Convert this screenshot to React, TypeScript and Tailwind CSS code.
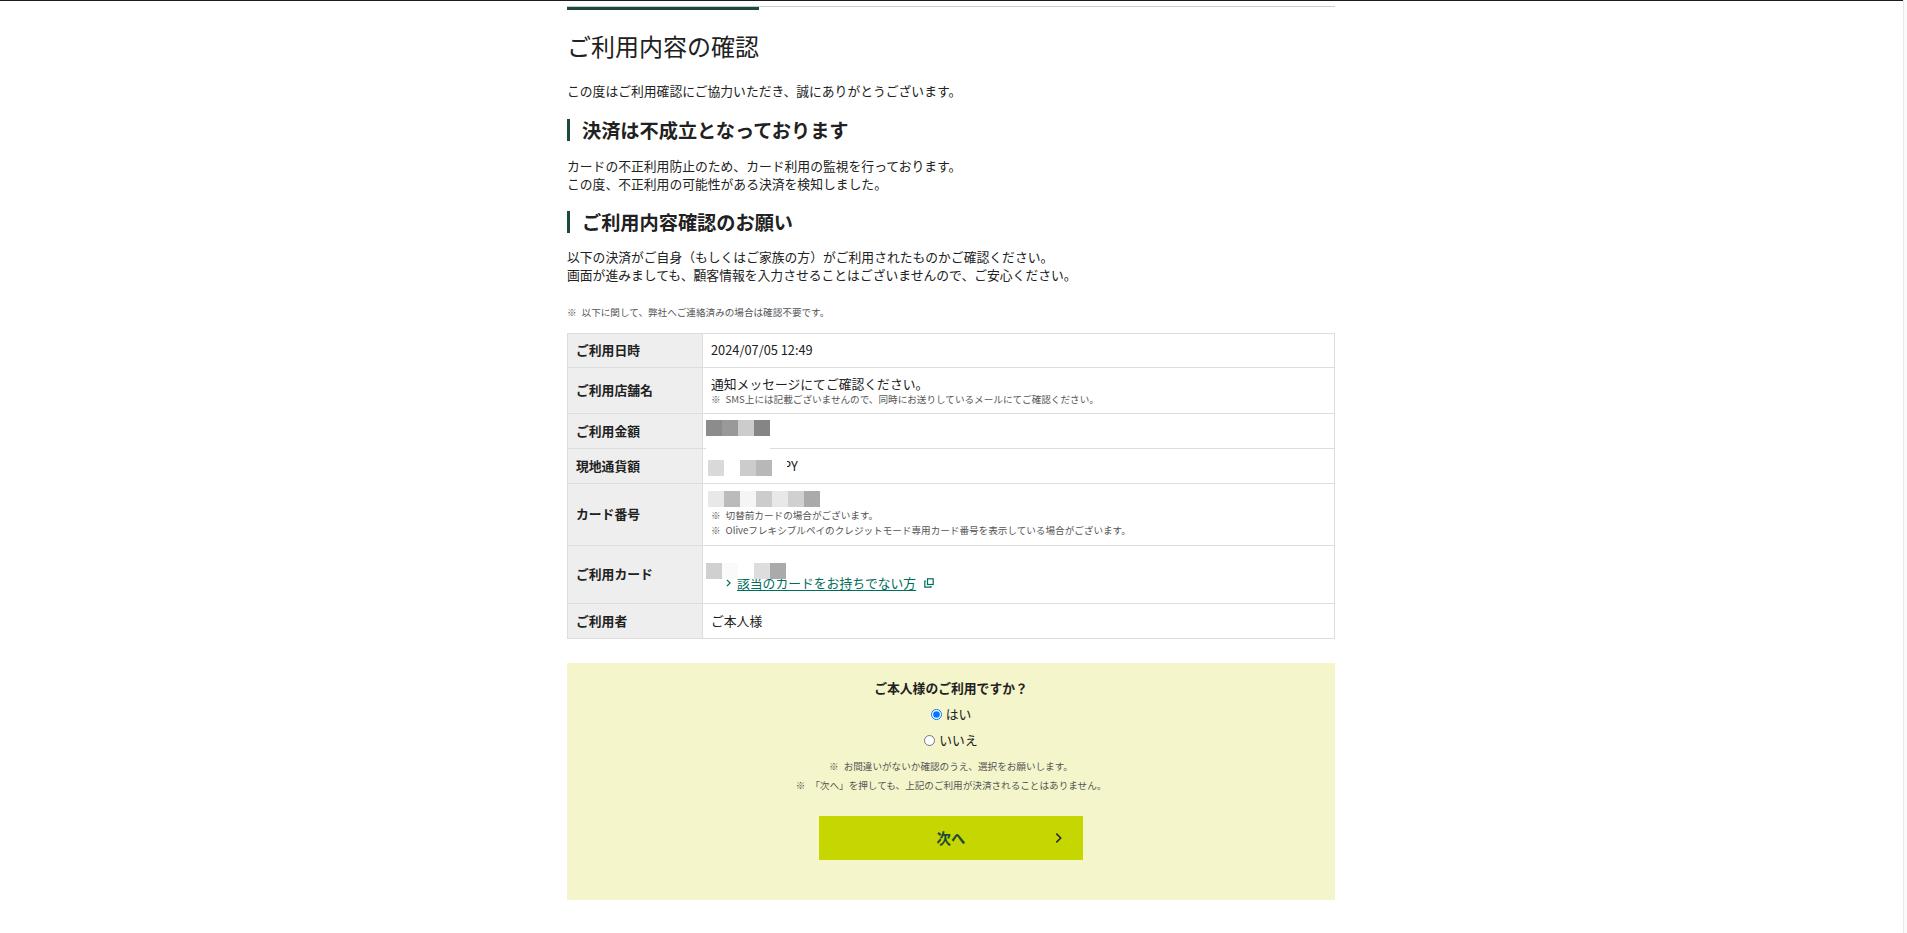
import React from "react";

const note = "text-[9.6px] leading-[15px] text-[#555]";

function Mosaic({ colors, className }: { colors: string[]; className: string }) {
  return (
    <div className={"absolute flex " + className}>
      {colors.map((c, i) => (
        <div key={i} className="h-4 w-4" style={{ backgroundColor: c }} />
      ))}
    </div>
  );
}

function Mark() {
  return <span className="mr-[5px]">※</span>;
}

function Heading({ children, className }: { children: React.ReactNode; className: string }) {
  return (
    <h2
      className={
        "border-l-[3px] border-[#1d4a3a] pl-[12px] text-[19.2px] font-bold leading-[22px] text-[#212121] " +
        className
      }
    >
      {children}
    </h2>
  );
}

function Row({ label, className, children }: { label: string; className: string; children: React.ReactNode }) {
  return (
    <tr className={className}>
      <th className="w-[135px] border border-[#ddd] bg-[#eee] pb-px pl-2 text-left align-middle text-[12.8px] font-bold text-[#212121]">
        {label}
      </th>
      <td className="relative border border-[#ddd] px-2 pb-px align-middle text-[12.8px] text-[#212121]">{children}</td>
    </tr>
  );
}

export default function App() {
  return (
    <div className="flex min-h-[933px] bg-white font-['Noto_Sans_CJK_JP','Noto_Sans',sans-serif] text-[#212121]">
      <main className="flex-1 border-t border-[#1c1c1c] pb-[33px] pr-px">
        <div className="mx-auto w-[768px]">
          <div className="mt-[5px] border-t border-[#ccc]">
            <div className="h-[3px] w-[192px] bg-[#1d4a3a]" />
          </div>

          <h1 className="mt-[18px] text-[24px] font-normal leading-[36px]">ご利用内容の確認</h1>

          <p className="mt-[18px] text-[12.8px] leading-[18px]">
            この度はご利用確認にご協力いただき、誠にありがとうございます。
          </p>

          <Heading className="mt-[19px]">決済は不成立となっております</Heading>

          <p className="mt-[16px] text-[12.8px] leading-[18px]">
            カードの不正利用防止のため、カード利用の監視を行っております。
            <br />
            この度、不正利用の可能性がある決済を検知しました。
          </p>

          <Heading className="mt-[18px]">ご利用内容確認のお願い</Heading>

          <p className="mt-[15px] text-[12.8px] leading-[18px]">
            以下の決済がご自身（もしくはご家族の方）がご利用されたものかご確認ください。
            <br />
            画面が進みましても、顧客情報を入力させることはございませんので、ご安心ください。
          </p>

          <p className={"mt-[21px] " + note}>
            <Mark />
            以下に関して、弊社へご連絡済みの場合は確認不要です。
          </p>

          <table className="mt-[13px] w-[768px] border-collapse">
            <tbody>
              <Row label="ご利用日時" className="h-[34px]">
                2024/07/05 12:49
              </Row>
              <Row label="ご利用店舗名" className="h-[46px]">
                <div className="pt-[2px] leading-[16px]">通知メッセージにてご確認ください。</div>
                <div className={note}>
                  <Mark />
                  SMS上には記載ございませんので、同時にお送りしているメールにてご確認ください。
                </div>
              </Row>
              <Row label="ご利用金額" className="h-[35px]">
                <Mosaic colors={["#8c8c8c", "#999", "#ccc", "#858585"]} className="left-[3px] top-[6px]" />
                <div className="absolute -bottom-px left-[3px] h-[12px] w-16 bg-white" />
              </Row>
              <Row label="現地通貨額" className="h-[35px]">
                <div className="pl-[72px]">PY</div>
                <div className="absolute left-[22px] top-[6px] h-[24px] w-[62px] bg-white" />
                <Mosaic colors={["#d9d9d9", "#fff", "#ccc", "#b8b8b8"]} className="left-[5px] top-[11px]" />
              </Row>
              <Row label="カード番号" className="h-[62px]">
                <div className="pb-[6px] pt-[24px]">
                  <div className={note}>
                    <Mark />
                    切替前カードの場合がございます。
                  </div>
                  <div className={note}>
                    <Mark />
                    Oliveフレキシブルペイのクレジットモード専用カード番号を表示している場合がございます。
                  </div>
                </div>
                <Mosaic
                  colors={["#e8e8e8", "#bbb", "#f5f5f5", "#ccc", "#e8e8e8", "#d0d0d0", "#aaa"]}
                  className="left-[5px] top-[7px]"
                />
              </Row>
              <Row label="ご利用カード" className="h-[58px]">
                <Mosaic colors={["#d0d0d0", "#fafafa", "#fff", "#ddd", "#aaa"]} className="left-[3px] top-[17px]" />
                <div className="flex items-center pl-[15px] pt-[18px] leading-[16px]">
                  <svg viewBox="0 0 6 10" className="mr-[6px] h-[8px] w-[5px] fill-none stroke-[#006d5b] stroke-[1.5]">
                    <path d="M1 1l4 4-4 4" />
                  </svg>
                  <a className="text-[#006d5b] underline underline-offset-2">該当のカードをお持ちでない方</a>
                  <svg viewBox="0 0 10 10" className="ml-[8px] h-[10px] w-[10px] fill-none stroke-[#006d5b] stroke-[1.2]">
                    <rect x="3.5" y="0.8" width="5.7" height="5.7" />
                    <path d="M2 3H0.8v6.2H7V8" />
                  </svg>
                </div>
              </Row>
              <Row label="ご利用者" className="h-[35px]">
                ご本人様
              </Row>
            </tbody>
          </table>

          <section className="mt-[24px] flex h-[237px] flex-col items-center bg-[#f4f5cb]">
            <p className="mt-[16px] text-[12.8px] font-bold leading-[18px]">ご本人様のご利用ですか？</p>
            <label className="mt-[8px] flex h-[18px] items-center gap-[4px] text-[12.8px]">
              <input type="radio" name="self" defaultChecked className="m-0 h-[11px] w-[11px]" />
              はい
            </label>
            <label className="mt-[8px] flex h-[18px] items-center gap-[4px] text-[12.8px]">
              <input type="radio" name="self" className="m-0 h-[11px] w-[11px]" />
              いいえ
            </label>
            <p className={"mt-[10px] " + note}>
              <Mark />
              お間違いがないか確認のうえ、選択をお願いします。
            </p>
            <p className={"mt-[4px] " + note}>
              <Mark />
              「次へ」を押しても、上記のご利用が決済されることはありません。
            </p>
            <button className="relative mt-[23px] h-[44px] w-[264px] bg-[#c6d600] text-[14.4px] font-bold text-[#1d4a3a]">
              次へ
              <svg viewBox="0 0 8 12" className="absolute right-[21px] top-[16px] h-[12px] w-[7px] fill-none stroke-[#2a2a3a] stroke-[1.8]">
                <path d="M1.5 1l5 5-5 5" />
              </svg>
            </button>
          </section>
        </div>
      </main>
      <div className="w-[4px] border-l border-[#e8e8e8] bg-[#fafafa]" />
    </div>
  );
}
